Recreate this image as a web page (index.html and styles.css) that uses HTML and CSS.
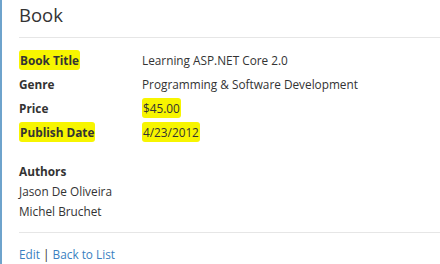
FILE: index.html
```html
<!DOCTYPE html>
<html lang="en">
<head>
    <meta charset="UTF-8">
    <title>Book</title>
    <link rel="stylesheet" href="styles.css">
</head>
<body>
    <div class="page">
        <h2>Book</h2>
        <hr>
        <dl class="details">
            <dt><mark>Book Title</mark></dt>
            <dd>Learning ASP.NET Core 2.0</dd>
            <dt>Genre</dt>
            <dd>Programming &amp; Software Development</dd>
            <dt>Price</dt>
            <dd><mark>$45.00</mark></dd>
            <dt><mark>Publish Date</mark></dt>
            <dd><mark>4/23/2012</mark></dd>
        </dl>
        <div class="authors">
            <h4>Authors</h4>
            <div>Jason De Oliveira</div>
            <div>Michel Bruchet</div>
        </div>
        <hr class="rule">
        <p class="links">
            <a href="#">Edit</a> | <a href="#">Back to List</a>
        </p>
    </div>
</body>
</html>
```

FILE: styles.css
```css
body {
  margin: 0;
  font-family: 'Open Sans', sans-serif;
  font-size: 11.8px;
  color: #333;
  background: #fff;
}

.page {
  border-left: 2px solid #6ea3cc;
  padding: 0 0 0 17px;
  min-height: 264px;
  box-sizing: border-box;
}

h2 {
  margin: 0;
  padding-top: 1px;
  font-size: 18.5px;
  font-weight: 400;
  line-height: 28px;
}

hr {
  border: 0;
  border-top: 1px solid #e6e6e6;
  margin: 8px 0 0;
}

hr.rule {
  margin-top: 11px;
}

.details {
  display: grid;
  grid-template-columns: 123px 1fr;
  grid-auto-rows: 24px;
  align-items: center;
  margin: 10px 0 0;
}

dt {
  font-weight: 700;
}

dd {
  margin: 0;
}

mark {
  background: #f7f500;
  color: inherit;
  padding: 2px 1px;
  border-radius: 3px;
}

.authors {
  margin-top: 17px;
  line-height: 20px;
}

.authors h4 {
  margin: 0;
  font-size: 11.8px;
  font-weight: 700;
}

.links {
  margin: 11px 0 0;
  line-height: 20px;
}

.links a {
  color: #3a7fc1;
  text-decoration: none;
}
```
